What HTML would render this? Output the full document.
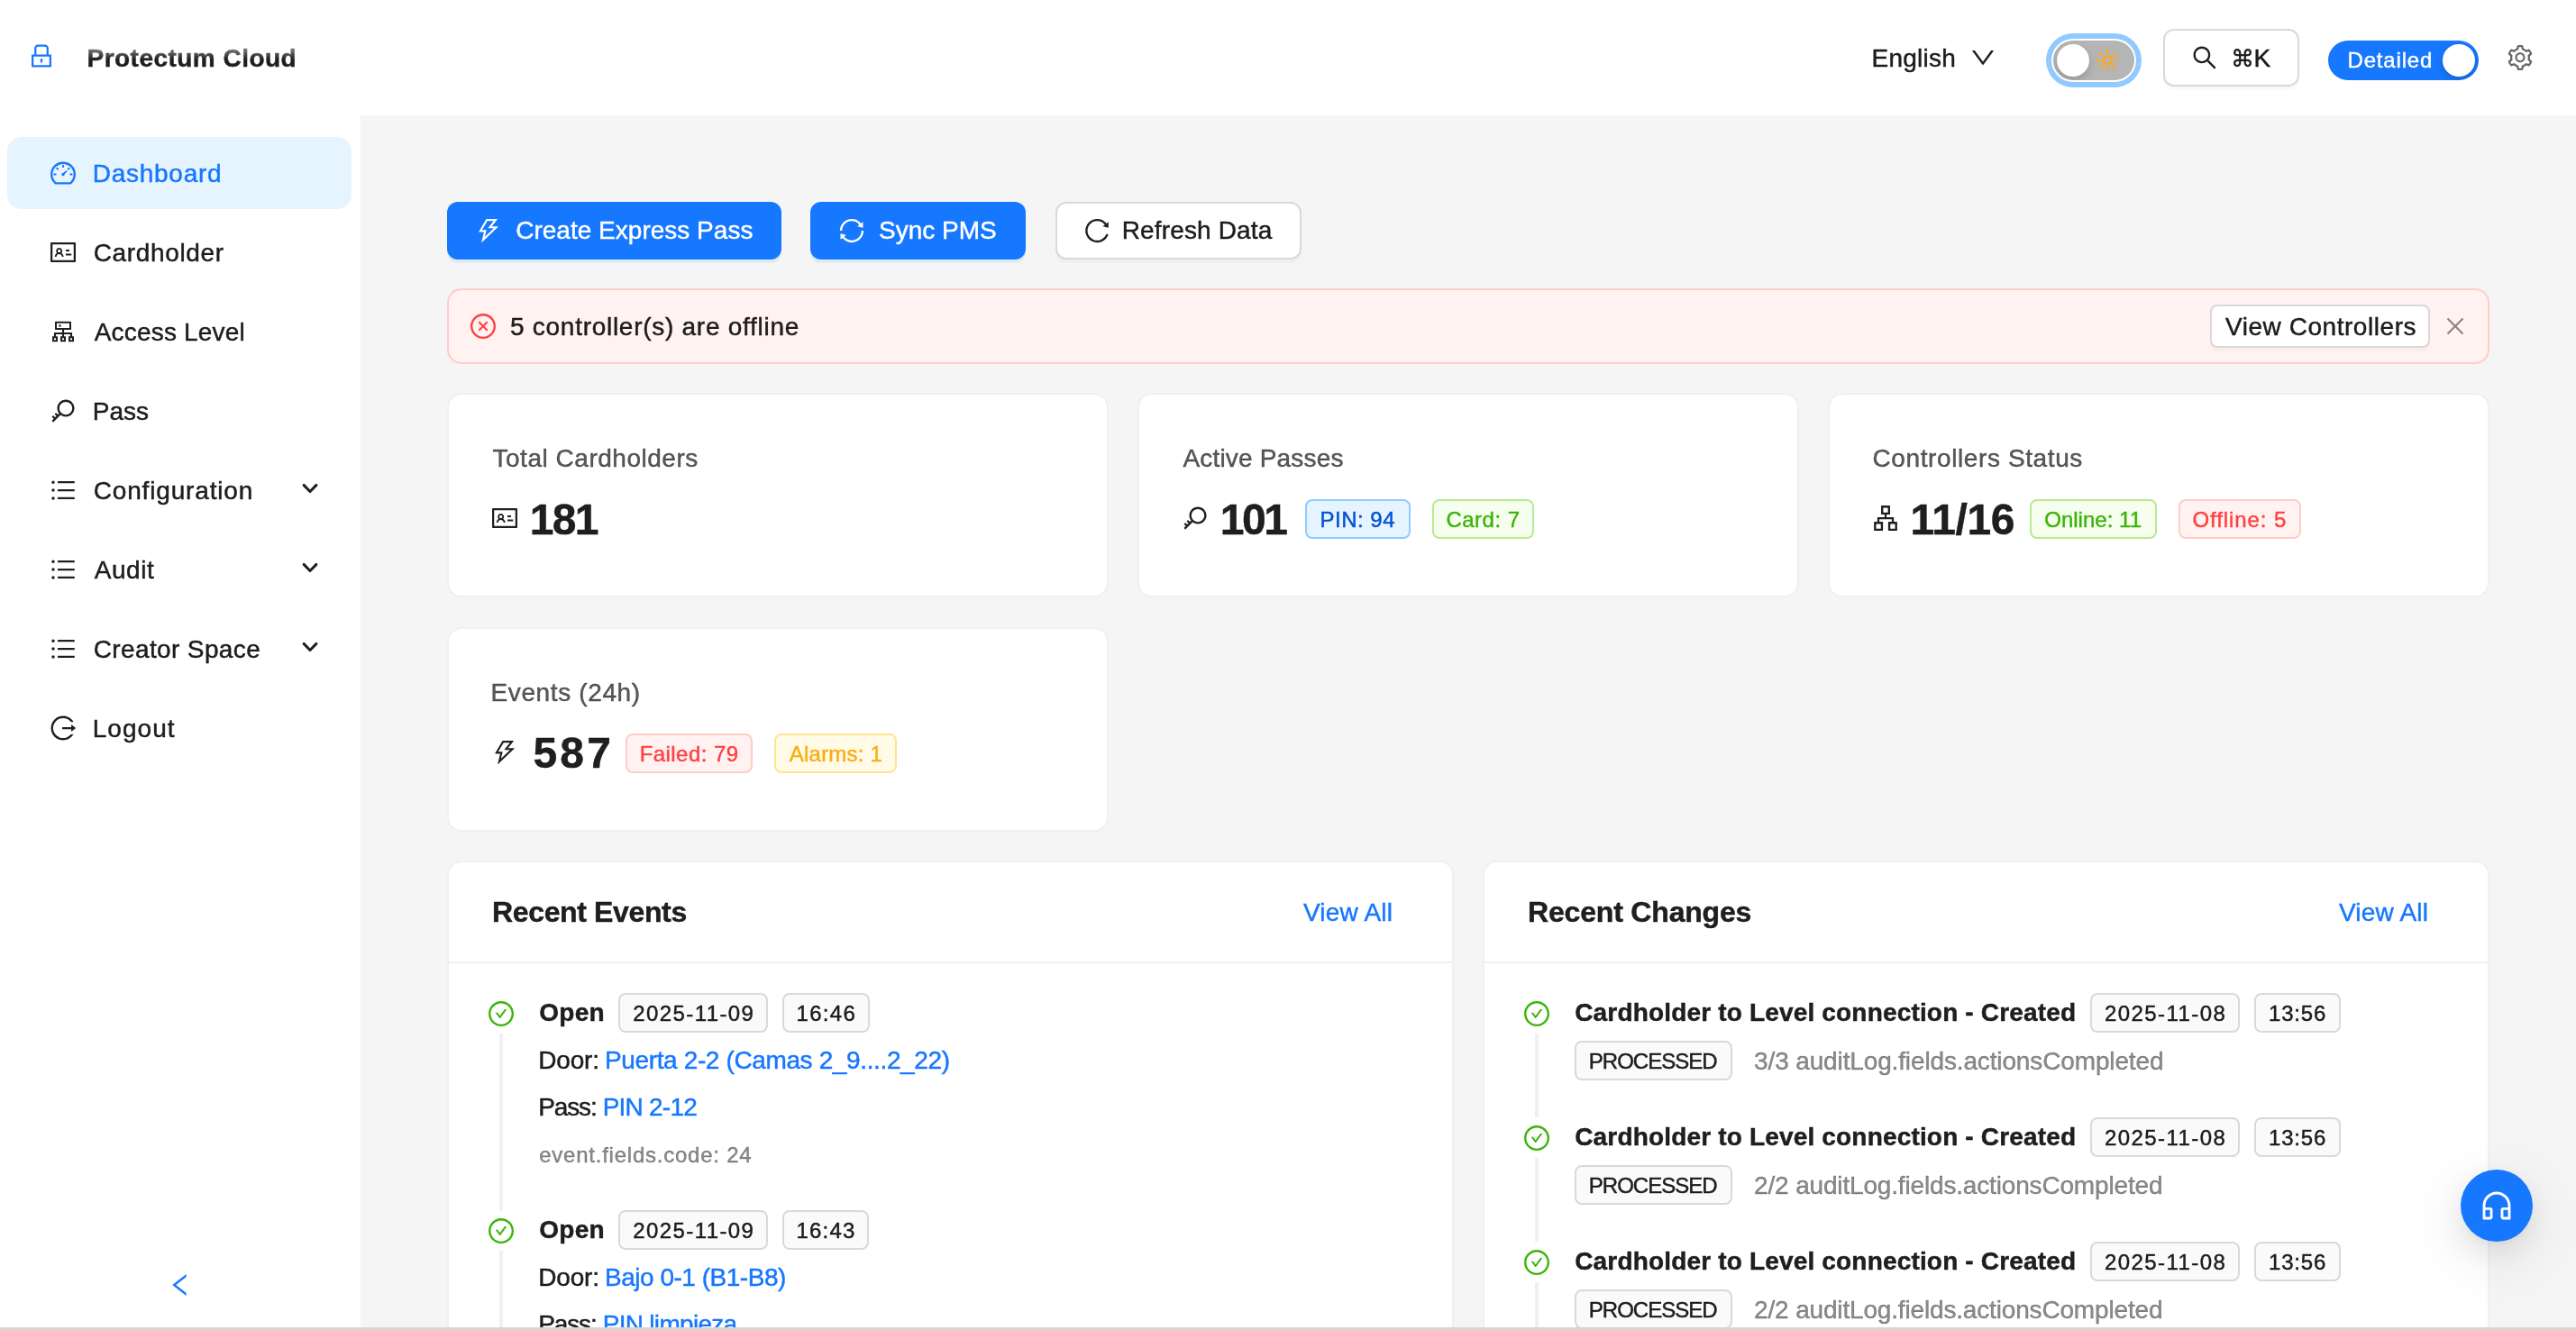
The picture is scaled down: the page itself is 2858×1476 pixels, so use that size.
<!DOCTYPE html>
<html lang="en">
<head>
<meta charset="utf-8">
<title>Protectum Cloud</title>
<style>
*{box-sizing:border-box;margin:0;padding:0}
html,body{width:2858px;height:1476px;overflow:hidden;background:#f5f5f5}
body{font-family:"Liberation Sans","DejaVu Sans",sans-serif;font-size:28px;line-height:44px;color:rgba(0,0,0,.88);position:relative}
svg{display:block;fill:currentColor}
.a{position:absolute;white-space:nowrap}
.t{position:absolute;white-space:nowrap;height:44px;line-height:44px;font-size:28px;-webkit-text-stroke:.45px}
.b{font-weight:700}
.s24{font-size:24px}
.lnk{color:#1677ff}
.mut{color:rgba(0,0,0,.45)}
#app{position:absolute;left:0;top:0;width:2858px;height:1476px;will-change:transform}
#hdr{position:absolute;left:0;top:0;width:2858px;height:128px;background:#fff}
#side{position:absolute;left:0;top:128px;width:400px;height:1348px;background:#fff}
#sel{position:absolute;left:8px;top:152px;width:382px;height:80px;border-radius:16px;background:#e6f4ff}
.brand{font-size:28px;font-weight:700;background:linear-gradient(180deg,#8a8a8a 0%,#8a8a8a 22%,#1f1f1f 52%,#1a1a1a 100%);-webkit-background-clip:text;background-clip:text;color:transparent;-webkit-text-fill-color:transparent}
.btn{position:absolute;height:64px;border-radius:12px;font-size:28px}
.btn.pri{background:#1677ff;color:#fff;box-shadow:0 4px 0 rgba(5,145,255,.1)}
.btn.def{background:#fff;border:2px solid #d9d9d9;box-shadow:0 4px 0 rgba(0,0,0,.02)}
.card{position:absolute;background:#fff;border:2px solid #f0f0f0;border-radius:16px}
.tag{position:absolute;height:44px;border:2px solid #d9d9d9;background:#fafafa;border-radius:8px}
.tag.blue{color:#0958d9;background:#e6f4ff;border-color:#91caff}
.tag.green{color:#389e0d;background:#f6ffed;border-color:#b7eb8f}
.tag.red{color:#ff4d4f;background:#fff2f0;border-color:#ffccc7}
.tag.gold{color:#faad14;background:#fffbe6;border-color:#ffe58f}
.num{position:absolute;white-space:nowrap;font-size:48px;font-weight:700;line-height:76px;height:76px;color:rgba(0,0,0,.88)}
.ttl{color:rgba(0,0,0,.65)}
.tail{position:absolute;width:4px;background:#f0f0f0}
@media (max-width:1600px){html,body{width:1429px;height:738px}#app{transform:scale(.5);transform-origin:0 0}}
.tt{color:rgba(0,0,0,.88)}
.tt.blue{color:#0452d8}.tt.green{color:#3cb40a}.tt.red{color:#ff4043}.tt.gold{color:#faad14}
</style>
</head>
<body>
<div id="app">
<div id="hdr">
<svg viewBox="64 64 896 896" width="28" height="28" style="position:absolute;left:32px;top:48px;color:#1677ff;"><path d="M832 464h-68V240c0-70.700-57.300-128-128-128H388c-70.700 0-128 57.300-128 128v224h-68c-17.700 0-32 14.300-32 32v384c0 17.700 14.300 32 32 32h640c17.700 0 32-14.300 32-32V496c0-17.700-14.300-32-32-32zM332 240c0-30.900 25.100-56 56-56h248c30.900 0 56 25.100 56 56v224H332V240zm460 600H232V536h560v304zM484 701v53c0 4.400 3.600 8 8 8h40c4.400 0 8-3.600 8-8v-53a48.010 48.010 0 10-56 0z"/></svg>
<div class="t brand" style="left:96.50px;top:43px;font-weight:700;letter-spacing:0.475px;">Protectum Cloud</div>
<div class="t" style="left:2076.50px;top:43px;letter-spacing:0.256px;">English</div>
<svg viewBox="64 64 896 896" width="28" height="28" style="position:absolute;left:2186px;top:50px;"><path d="M884 256h-75c-5.100 0-9.900 2.500-12.900 6.600L512 654.200 227.900 262.600c-3-4.100-7.800-6.600-12.900-6.600h-75c-6.500 0-10.300 7.400-6.500 12.700l352.600 486.100c12.800 17.600 39 17.600 51.700 0l352.600-486.100c3.900-5.300.1-12.700-6.400-12.700z"/></svg>
<div class="a" style="left:2270px;top:37px;width:106px;height:60px;border-radius:30px;background:#91caff"></div>
<div class="a" style="left:2276px;top:43px;width:94px;height:48px;border-radius:24px;background:#fff"></div>
<div class="a" style="left:2278px;top:45px;width:90px;height:44px;border-radius:22px;background:#b5b5b5;overflow:hidden"><div class="a" style="left:4px;top:4px;width:36px;height:36px;border-radius:18px;background:#fff;box-shadow:0 4px 8px rgba(0,35,11,.2)"></div></div>
<svg class="a" style="left:2324px;top:53px" width="28" height="28" viewBox="-14 -14 28 28"><g stroke="#f9a825" stroke-width="2.5"><line x1="7.40" y1="0.00" x2="12.10" y2="0.00"/><line x1="5.23" y1="5.23" x2="8.56" y2="8.56"/><line x1="0.00" y1="7.40" x2="0.00" y2="12.10"/><line x1="-5.23" y1="5.23" x2="-8.56" y2="8.56"/><line x1="-7.40" y1="0.00" x2="-12.10" y2="0.00"/><line x1="-5.23" y1="-5.23" x2="-8.56" y2="-8.56"/><line x1="-0.00" y1="-7.40" x2="-0.00" y2="-12.10"/><line x1="5.23" y1="-5.23" x2="8.56" y2="-8.56"/></g><circle r="4.6" fill="none" stroke="#f9a825" stroke-width="2.5"/></svg>
<div class="btn def" style="left:2400px;top:32px;width:151px"></div>
<svg viewBox="64 64 896 896" width="28" height="28" style="position:absolute;left:2432px;top:50px;"><path d="M909.6 854.5L649.9 594.8C690.2 542.7 712 479 712 412c0-80.2-31.3-155.4-87.9-212.1-56.6-56.7-132-87.9-212.1-87.9s-155.500 31.300-212.100 87.900C143.200 256.500 112 331.800 112 412c0 80.100 31.300 155.500 87.900 212.100C256.500 680.800 331.800 712 412 712c67 0 130.600-21.800 182.700-62l259.700 259.600a8.200 8.200 0 0011.600 0l43.600-43.500a8.200 8.200 0 000-11.600zM570.400 570.400C528 612.700 471.800 636 412 636s-116-23.300-158.400-65.600C211.300 528 188 471.800 188 412s23.300-116.100 65.600-158.400C296 211.300 352.200 188 412 188s116.100 23.200 158.400 65.600S636 352.200 636 412s-23.300 116.100-65.600 158.400z"/></svg>
<div class="t" style="left:2475px;top:43px"><span style="font-family:'DejaVu Sans',sans-serif;font-size:26px">⌘</span><span style="margin-left:-.5px">K</span></div>
<div class="a" style="left:2583px;top:45px;width:167px;height:44px;border-radius:22px;background:#1677ff;overflow:hidden"><div class="a" style="left:127px;top:4px;width:36px;height:36px;border-radius:18px;background:#fff;box-shadow:0 4px 8px rgba(0,35,11,.2)"></div></div>
<div class="t" style="left:2604.50px;top:45px;font-size:24px;letter-spacing:0.828px;color:#fff">Detailed</div>
<svg viewBox="64 64 896 896" width="28" height="28" style="position:absolute;left:2782px;top:50px;color:rgba(0,0,0,.6);"><path d="M924.8 625.700l-65.500-56c3.100-19 4.700-38.400 4.700-57.800s-1.600-38.800-4.700-57.800l65.500-56a32.030 32.030 0 009.300-35.200l-.9-2.600a442.350 442.350 0 00-79.700-137.900l-1.800-2.100a32.120 32.120 0 00-35.100-9.500l-81.300 28.900c-30-24.600-63.500-44-99.700-57.600l-15.700-85a32.050 32.050 0 00-25.800-25.700l-2.700-.5c-52.100-9.400-106.900-9.400-159 0l-2.700.5a32.050 32.050 0 00-25.800 25.700l-15.800 85.400a351.860 351.860 0 00-99 57.400l-81.900-29.100a32 32 0 00-35.100 9.500l-1.800 2.100a446.020 446.020 0 00-79.700 137.900l-.9 2.600c-4.500 12.500-.8 26.500 9.300 35.200l66.300 56.600c-3.100 18.800-4.600 38-4.600 57.100 0 19.200 1.500 38.400 4.600 57.100L99 625.500a32.030 32.030 0 00-9.300 35.200l.9 2.600c18.100 50.400 44.900 96.900 79.700 137.900l1.800 2.100a32.120 32.120 0 0035.100 9.500l81.900-29.100c29.800 24.500 63.100 43.900 99 57.400l15.800 85.400a32.050 32.050 0 0025.800 25.700l2.700.5a449.400 449.400 0 00159 0l2.700-.5a32.050 32.050 0 0025.800-25.700l15.700-85a350 350 0 0099.700-57.600l81.300 28.900a32 32 0 0035.100-9.500l1.800-2.100c34.800-41.100 61.600-87.500 79.700-137.900l.9-2.600c4.500-12.300.8-26.300-9.300-35zM788.300 465.900c2.500 15.100 3.800 30.600 3.800 46.100s-1.300 31-3.800 46.100l-6.600 40.100 74.700 63.900a370.030 370.030 0 01-42.600 73.600L721 702.800l-31.400 25.800c-23.900 19.600-50.500 35-79.300 45.800l-38.100 14.300-17.900 97a377.500 377.500 0 01-85 0l-17.900-97.200-37.800-14.500c-28.500-10.800-55-26.200-78.700-45.700l-31.400-25.900-93.400 33.200c-17-22.900-31.200-47.600-42.600-73.600l75.500-64.500-6.500-40c-2.400-14.900-3.700-30.300-3.700-45.500 0-15.300 1.200-30.600 3.700-45.500l6.500-40-75.500-64.500c11.300-26.100 25.600-50.700 42.600-73.600l93.400 33.200 31.400-25.900c23.700-19.500 50.200-34.900 78.700-45.700l37.900-14.300 17.900-97.200c28.100-3.200 56.800-3.200 85 0l17.900 97 38.100 14.300c28.700 10.800 55.400 26.200 79.300 45.800l31.400 25.800 92.800-32.900c17 22.900 31.200 47.600 42.600 73.600L781.800 426l6.500 39.900zM512 326c-97.200 0-176 78.800-176 176s78.800 176 176 176 176-78.800 176-176-78.800-176-176-176zm79.200 255.200A111.600 111.600 0 01512 614c-29.900 0-58-11.700-79.200-32.800A111.600 111.600 0 01400 502c0-29.900 11.700-58 32.800-79.200C454 401.600 482.100 390 512 390c29.900 0 58 11.600 79.200 32.800A111.600 111.600 0 01624 502c0 29.900-11.700 58-32.800 79.200z"/></svg>
</div>
<div id="side"></div><div id="sel"></div>
<svg viewBox="64 64 896 896" width="28" height="28" style="position:absolute;left:56px;top:178px;color:#1677ff;"><path d="M924.800 385.600a446.700 446.700 0 00-96-142.400 446.700 446.700 0 00-142.400-96C631.100 123.800 572.500 112 512 112s-119.100 11.800-174.400 35.200a446.700 446.700 0 00-142.400 96 446.700 446.700 0 00-96 142.400C75.800 440.900 64 499.500 64 560c0 132.700 58.300 257.700 159.900 343.100l1.700 1.400c5.800 4.800 13.100 7.500 20.600 7.500h531.700c7.500 0 14.800-2.700 20.600-7.500l1.700-1.400C901.700 817.700 960 692.700 960 560c0-60.500-11.900-119.100-35.200-174.400zM761.400 836H262.600A371.120 371.120 0 01140 560c0-99.400 38.700-192.800 109-263 70.300-70.300 163.700-109 263-109 99.400 0 192.800 38.700 263 109 70.300 70.300 109 163.700 109 263 0 105.600-44.500 205.500-122.600 276zM623.500 421.500a8.030 8.030 0 00-11.300 0L527.700 506c-18.700-5-39.400-.2-54.100 14.500a55.950 55.950 0 000 79.200 55.950 55.950 0 0079.200 0 55.870 55.870 0 0014.500-54.100l84.500-84.500c3.100-3.100 3.100-8.200 0-11.300l-28.300-28.300zM490 320h44c4.400 0 8-3.600 8-8v-80c0-4.400-3.600-8-8-8h-44c-4.400 0-8 3.600-8 8v80c0 4.400 3.600 8 8 8zm260 218v44c0 4.400 3.600 8 8 8h80c4.400 0 8-3.600 8-8v-44c0-4.400-3.600-8-8-8h-80c-4.400 0-8 3.600-8 8zm12.700-197.200l-31.100-31.100a8.030 8.030 0 00-11.300 0l-56.600 56.600a8.030 8.030 0 000 11.300l31.100 31.100c3.100 3.100 8.200 3.100 11.300 0l56.600-56.600c3.100-3.100 3.100-8.200 0-11.300zm-458.600-31.100a8.030 8.030 0 00-11.300 0l-31.100 31.100a8.030 8.030 0 000 11.300l56.600 56.600c3.100 3.100 8.200 3.100 11.300 0l31.100-31.100c3.100-3.100 3.100-8.200 0-11.300l-56.600-56.600zM262 530h-80c-4.400 0-8 3.600-8 8v44c0 4.400 3.600 8 8 8h80c4.400 0 8-3.600 8-8v-44c0-4.400-3.600-8-8-8z"/></svg>
<div class="t" style="left:102.70px;top:171px;letter-spacing:0.749px;color:#1677ff;">Dashboard</div>
<svg viewBox="64 64 896 896" width="28" height="28" style="position:absolute;left:56px;top:266px;"><path d="M928 160H96c-17.700 0-32 14.300-32 32v640c0 17.700 14.300 32 32 32h832c17.700 0 32-14.300 32-32V192c0-17.700-14.300-32-32-32zm-40 632H136V232h752v560zM610.300 476h123.400c1.300 0 2.300-3.600 2.300-8v-48c0-4.400-1-8-2.300-8H610.300c-1.300 0-2.300 3.600-2.300 8v48c0 4.400 1 8 2.300 8zm4.800 144h185.700c3.900 0 7.100-3.600 7.100-8v-48c0-4.400-3.200-8-7.100-8H615.100c-3.900 0-7.100 3.600-7.100 8v48c0 4.400 3.200 8 7.100 8zM224 673h43.900c4.200 0 7.600-3.300 7.900-7.500 3.800-50.500 46-90.500 97.200-90.500s93.400 40 97.200 90.500c.3 4.200 3.700 7.500 7.900 7.500H522a8 8 0 008-8.400c-2.800-53.300-32-99.700-74.600-126.100a111.800 111.800 0 0029.100-75.500c0-61.900-49.900-112-111.400-112s-111.400 50.100-111.400 112c0 29.100 11 55.500 29.100 75.500a158.090 158.090 0 00-74.600 126.100c-.4 4.600 3.200 8.400 7.800 8.400zm149-262c28.500 0 51.700 23.300 51.700 52s-23.200 52-51.700 52-51.700-23.300-51.700-52 23.200-52 51.700-52z"/></svg>
<div class="t" style="left:103.70px;top:259px;letter-spacing:0.645px;">Cardholder</div>
<svg viewBox="64 64 896 896" width="28" height="28" style="position:absolute;left:56px;top:354px;"><path d="M888 680h-54V540H546v-92h238c8.800 0 16-7.200 16-16V168c0-8.800-7.200-16-16-16H240c-8.800 0-16 7.200-16 16v264c0 8.800 7.200 16 16 16h238v92H190v140h-54c-4.400 0-8 3.600-8 8v176c0 4.400 3.600 8 8 8h176c4.400 0 8-3.600 8-8V688c0-4.400-3.600-8-8-8h-54v-72h220v72h-54c-4.400 0-8 3.600-8 8v176c0 4.400 3.600 8 8 8h176c4.400 0 8-3.600 8-8V688c0-4.400-3.600-8-8-8h-54v-72h220v72h-54c-4.400 0-8 3.600-8 8v176c0 4.400 3.600 8 8 8h176c4.400 0 8-3.600 8-8V688c0-4.400-3.600-8-8-8zM256 805.300c0 1.500-1.200 2.700-2.700 2.700h-58.700c-1.500 0-2.700-1.200-2.700-2.700v-58.700c0-1.500 1.200-2.700 2.700-2.700h58.700c1.500 0 2.700 1.200 2.700 2.700v58.700zm288 0c0 1.500-1.200 2.700-2.700 2.700h-58.700c-1.500 0-2.700-1.200-2.700-2.700v-58.700c0-1.500 1.200-2.700 2.700-2.700h58.700c1.500 0 2.700 1.200 2.700 2.700v58.700zM288 384V216h448v168H288zm544 421.300c0 1.500-1.200 2.700-2.700 2.700h-58.700c-1.500 0-2.700-1.200-2.700-2.700v-58.700c0-1.500 1.200-2.700 2.700-2.700h58.700c1.500 0 2.700 1.200 2.700 2.700v58.700zM360 300a40 40 0 1080 0 40 40 0 10-80 0z"/></svg>
<div class="t" style="left:104.70px;top:347px;letter-spacing:0.196px;">Access Level</div>
<svg viewBox="64 64 896 896" width="28" height="28" style="position:absolute;left:56px;top:442px;"><path d="M608 112c-167.900 0-304 136.100-304 304 0 70.300 23.900 135 63.900 186.500l-41.100 41.100-62.300-62.300a8.150 8.150 0 00-11.400 0l-39.800 39.800a8.150 8.150 0 000 11.400l62.300 62.300-44.900 44.900-62.300-62.300a8.150 8.150 0 00-11.400 0l-39.800 39.800a8.150 8.150 0 000 11.400l62.300 62.300-65.300 65.300a8.030 8.030 0 000 11.300l42.300 42.300c3.100 3.100 8.200 3.100 11.300 0l253.600-253.600A304.060 304.060 0 00608 720c167.900 0 304-136.100 304-304S775.900 112 608 112zm161.200 465.200C726.200 620.300 668.900 644 608 644c-60.900 0-118.200-23.700-161.200-66.800-43.100-43-66.800-100.300-66.800-161.200 0-60.900 23.700-118.200 66.800-161.200 43-43.100 100.300-66.800 161.200-66.800 60.900 0 118.200 23.700 161.200 66.800 43.100 43 66.800 100.300 66.800 161.200 0 60.900-23.700 118.200-66.800 161.200z"/></svg>
<div class="t" style="left:102.70px;top:435px;letter-spacing:0.017px;">Pass</div>
<svg viewBox="64 64 896 896" width="28" height="28" style="position:absolute;left:56px;top:530px;"><path d="M912 192H328c-4.400 0-8 3.600-8 8v56c0 4.400 3.600 8 8 8h584c4.400 0 8-3.600 8-8v-56c0-4.400-3.600-8-8-8zm0 284H328c-4.400 0-8 3.600-8 8v56c0 4.400 3.600 8 8 8h584c4.400 0 8-3.600 8-8v-56c0-4.400-3.600-8-8-8zm0 284H328c-4.400 0-8 3.600-8 8v56c0 4.400 3.600 8 8 8h584c4.400 0 8-3.600 8-8v-56c0-4.400-3.600-8-8-8zM104 228a56 56 0 10112 0 56 56 0 10-112 0zm0 284a56 56 0 10112 0 56 56 0 10-112 0zm0 284a56 56 0 10112 0 56 56 0 10-112 0z"/></svg>
<div class="t" style="left:103.70px;top:523px;letter-spacing:0.843px;">Configuration</div>
<svg class="a" style="left:332px;top:530px" width="24" height="24" viewBox="0 0 24 24"><path d="M5.1 8.4L12 15.5L18.9 8.4" fill="none" stroke="rgba(0,0,0,.88)" stroke-width="3" stroke-linecap="round" stroke-linejoin="round"/></svg>
<svg viewBox="64 64 896 896" width="28" height="28" style="position:absolute;left:56px;top:618px;"><path d="M912 192H328c-4.400 0-8 3.600-8 8v56c0 4.400 3.600 8 8 8h584c4.400 0 8-3.600 8-8v-56c0-4.400-3.600-8-8-8zm0 284H328c-4.400 0-8 3.600-8 8v56c0 4.400 3.600 8 8 8h584c4.400 0 8-3.600 8-8v-56c0-4.400-3.600-8-8-8zm0 284H328c-4.400 0-8 3.600-8 8v56c0 4.400 3.600 8 8 8h584c4.400 0 8-3.600 8-8v-56c0-4.400-3.600-8-8-8zM104 228a56 56 0 10112 0 56 56 0 10-112 0zm0 284a56 56 0 10112 0 56 56 0 10-112 0zm0 284a56 56 0 10112 0 56 56 0 10-112 0z"/></svg>
<div class="t" style="left:104.70px;top:611px;letter-spacing:0.565px;">Audit</div>
<svg class="a" style="left:332px;top:618px" width="24" height="24" viewBox="0 0 24 24"><path d="M5.1 8.4L12 15.5L18.9 8.4" fill="none" stroke="rgba(0,0,0,.88)" stroke-width="3" stroke-linecap="round" stroke-linejoin="round"/></svg>
<svg viewBox="64 64 896 896" width="28" height="28" style="position:absolute;left:56px;top:706px;"><path d="M912 192H328c-4.400 0-8 3.600-8 8v56c0 4.400 3.600 8 8 8h584c4.400 0 8-3.600 8-8v-56c0-4.400-3.600-8-8-8zm0 284H328c-4.400 0-8 3.600-8 8v56c0 4.400 3.600 8 8 8h584c4.400 0 8-3.600 8-8v-56c0-4.400-3.600-8-8-8zm0 284H328c-4.400 0-8 3.600-8 8v56c0 4.400 3.600 8 8 8h584c4.400 0 8-3.600 8-8v-56c0-4.400-3.600-8-8-8zM104 228a56 56 0 10112 0 56 56 0 10-112 0zm0 284a56 56 0 10112 0 56 56 0 10-112 0zm0 284a56 56 0 10112 0 56 56 0 10-112 0z"/></svg>
<div class="t" style="left:103.70px;top:699px;letter-spacing:0.378px;">Creator Space</div>
<svg class="a" style="left:332px;top:706px" width="24" height="24" viewBox="0 0 24 24"><path d="M5.1 8.4L12 15.5L18.9 8.4" fill="none" stroke="rgba(0,0,0,.88)" stroke-width="3" stroke-linecap="round" stroke-linejoin="round"/></svg>
<svg viewBox="64 64 896 896" width="28" height="28" style="position:absolute;left:56px;top:794px;"><path d="M868 732h-70.300c-4.800 0-9.300 2.100-12.300 5.800-7 8.500-14.500 16.700-22.400 24.500a353.840 353.840 0 01-112.700 75.900A352.800 352.800 0 01512.400 866c-47.900 0-94.300-9.400-137.900-27.800a353.840 353.840 0 01-112.700-75.900 353.280 353.280 0 01-76-112.500C167.300 606.200 158 559.900 158 512s9.400-94.200 27.800-137.800c17.800-42.100 43.400-80 76-112.500s70.500-58.100 112.700-75.900c43.600-18.400 90-27.800 137.900-27.800 47.900 0 94.300 9.300 137.900 27.800 42.200 17.800 80.100 43.400 112.700 75.900 7.900 7.900 15.300 16.100 22.400 24.500 3 3.700 7.600 5.800 12.300 5.800H868c6.300 0 10.200-7 6.700-12.300C798 160.500 663.800 81.600 511.300 82 271.700 82.600 79.600 277.100 82 516.400 84.400 751.900 276.200 942 512.400 942c152.100 0 285.700-78.800 362.300-197.700 3.400-5.300-.4-12.300-6.700-12.300zm88.900-226.300L815 393.700c-5.300-4.200-13-.4-13 6.300v76H488c-4.400 0-8 3.600-8 8v56c0 4.400 3.600 8 8 8h314v76c0 6.700 7.800 10.500 13 6.300l141.900-112a8 8 0 000-12.600z"/></svg>
<div class="t" style="left:102.70px;top:787px;letter-spacing:1.048px;">Logout</div>
<svg viewBox="64 64 896 896" width="28" height="28" style="position:absolute;left:186px;top:1412px;color:#1677ff;"><path d="M724 218.300V141c0-6.700-7.700-10.400-12.900-6.300L260.300 486.800a31.860 31.860 0 000 50.300l450.800 352.100c5.300 4.100 12.900.4 12.900-6.300v-77.300c0-4.900-2.300-9.600-6.100-12.600l-360-281 360-281.100c3.800-3 6.100-7.700 6.100-12.600z"/></svg>
<div class="btn pri" style="left:496px;top:224px;width:371px"></div>
<svg viewBox="64 64 896 896" width="28" height="28" style="position:absolute;left:528px;top:242px;color:#fff;"><path d="M848 359.300H627.700L825.800 109c4.100-5.300.4-13-6.300-13H436c-2.800 0-5.500 1.500-6.900 4L170 547.500c-3.100 5.300.7 12 6.900 12h174.400l-89.400 357.600c-1.900 7.800 7.500 13.300 13.300 7.700L853.500 373c5.200-4.900 1.700-13.700-5.500-13.700zM378.200 732.500l60.300-241H281.100l189.600-327.400h224.600L487 427.400h211L378.200 732.500z"/></svg>
<div class="t" style="left:572.20px;top:234px;letter-spacing:0.012px;color:#fff">Create Express Pass</div>
<div class="btn pri" style="left:899px;top:224px;width:239px"></div>
<svg viewBox="64 64 896 896" width="28" height="28" style="position:absolute;left:931px;top:242px;color:#fff;"><path d="M168 504.200c1-43.700 10-86.100 26.900-126 17.300-41 42.100-77.700 73.700-109.400S337 212.300 378 195c42.400-17.900 87.400-27 133.900-27s91.500 9.100 133.800 27A341.500 341.500 0 01755 268.800c9.900 9.900 19.200 20.400 27.800 31.400l-60.200 47a8 8 0 003 14.100l175.700 43c5 1.200 9.900-2.600 9.900-7.700l.8-180.900c0-6.700-7.700-10.500-12.900-6.300l-56.400 44.100C765.800 155.100 646.200 92 511.800 92 282.700 92 96.300 275.600 92 503.800a8 8 0 008 8.200h60c4.400 0 7.900-3.500 8-7.800zm756 7.800h-60c-4.400 0-7.900 3.500-8 7.800-1 43.700-10 86.100-26.900 126-17.300 41-42.100 77.800-73.700 109.400A342.450 342.450 0 01512.100 856a342.240 342.240 0 01-243.200-100.800c-9.900-9.900-19.200-20.400-27.800-31.400l60.200-47a8 8 0 00-3-14.100l-175.700-43c-5-1.200-9.900 2.600-9.900 7.700l-.7 181c0 6.700 7.700 10.500 12.900 6.300l56.400-44.100C258.200 868.900 377.800 932 512.200 932c229.200 0 415.500-183.700 419.800-411.800a8 8 0 00-8-8.200z"/></svg>
<div class="t" style="left:975.00px;top:234px;color:#fff">Sync PMS</div>
<div class="btn def" style="left:1171px;top:224px;width:273px"></div>
<svg viewBox="64 64 896 896" width="28" height="28" style="position:absolute;left:1203px;top:242px;"><path d="M909.100 209.300l-56.400 44.100C775.800 155.100 656.200 92 521.900 92 290 92 102.300 279.500 102 511.500 101.700 743.700 289.800 932 521.900 932c181.300 0 335.800-115 394.600-276.100 1.500-4.200-.7-8.900-4.900-10.300l-56.700-19.500a8 8 0 00-10.100 4.800c-1.800 5-3.800 10-5.900 14.900-17.300 41-42.100 77.800-73.700 109.400A344.770 344.770 0 01655.900 829c-42.300 17.900-87.400 27-133.800 27-46.500 0-91.500-9.100-133.800-27A341.500 341.500 0 01279 755.200a342.160 342.160 0 01-73.700-109.400c-17.900-42.400-27-87.400-27-133.900s9.100-91.500 27-133.900c17.300-41 42.100-77.800 73.700-109.400 31.600-31.600 68.400-56.400 109.300-73.800 42.300-17.900 87.400-27 133.800-27 46.500 0 91.500 9.100 133.800 27a341.500 341.500 0 01109.300 73.800c9.900 9.900 19.200 20.400 27.800 31.400l-60.200 47a8 8 0 003 14.100l175.600 43c5 1.200 9.900-2.600 9.900-7.700l.8-180.900c-.1-6.600-7.800-10.300-13-6.200z"/></svg>
<div class="t" style="left:1244.70px;top:234px;letter-spacing:0.146px;">Refresh Data</div>
<div class="a" style="left:496px;top:320px;width:2266px;height:84px;border:2px solid #ffccc7;background:#fff2f0;border-radius:16px"></div>
<svg viewBox="64 64 896 896" width="28" height="28" style="position:absolute;left:522px;top:348px;color:#ff4043;"><path d="M512 64c247.400 0 448 200.600 448 448S759.400 960 512 960 64 759.400 64 512 264.600 64 512 64zm0 76c-205.400 0-372 166.600-372 372s166.600 372 372 372 372-166.600 372-372-166.600-372-372-372zm128.010 198.830c.030 0 .050.010.090.060l45.020 45.010a.200.200 0 01.050.090.120.120 0 010 .070c0 .020-.010.040-.050.080L557.250 512l127.870 127.860a.270.270 0 01.050.060v.020a.120.120 0 010 .070c0 .030-.010.050-.050.090l-45.020 45.020a.200.200 0 01-.090.050.120.120 0 01-.070 0c-.020 0-.040-.010-.080-.050L512 557.250 384.140 685.120c-.040.040-.060.050-.080.050a.120.120 0 01-.070 0c-.030 0-.050-.010-.090-.050l-45.020-45.020a.200.200 0 01-.050-.090.120.120 0 010-.070c0-.020.010-.040.060-.080L466.750 512 338.880 384.140a.270.270 0 01-.050-.060l-.010-.020a.120.120 0 010-.070c0-.030.010-.050.050-.090l45.020-45.020a.200.200 0 01.090-.050.120.120 0 01.070 0c.020 0 .040.010.080.060L512 466.750l127.860-127.860c.040-.050.060-.060.080-.060a.120.120 0 01.070 0z"/></svg>
<div class="t" style="left:566.00px;top:341px;letter-spacing:0.726px;">5 controller(s) are offline</div>
<div class="btn def" style="left:2452px;top:338px;width:244px;height:48px;border-radius:8px"></div>
<div class="t" style="left:2469.00px;top:341px;letter-spacing:0.544px;">View Controllers</div>
<svg viewBox="64 64 896 896" width="24" height="24" style="position:absolute;left:2712px;top:350px;color:rgba(0,0,0,.45);"><path d="M799.86 166.31c.02 0 .04.02.08.06l57.69 57.7c.04.03.05.05.06.08a.12.12 0 010 .06c0 .03-.02.05-.06.09L569.93 512l287.7 287.7c.04.04.05.06.06.09a.12.12 0 010 .07c0 .02-.02.04-.06.08l-57.7 57.69c-.03.04-.05.05-.07.06a.12.12 0 01-.07 0c-.03 0-.05-.02-.09-.06L512 569.93l-287.7 287.7c-.04.04-.06.05-.09.06a.12.12 0 01-.07 0c-.02 0-.04-.02-.08-.06l-57.69-57.7c-.04-.03-.05-.05-.06-.07a.12.12 0 010-.07c0-.03.02-.05.06-.09L454.07 512l-287.7-287.7c-.04-.04-.05-.06-.06-.09a.12.12 0 010-.07c0-.02.02-.04.06-.08l57.7-57.69c.03-.04.05-.05.07-.06a.12.12 0 01.07 0c.03 0 .05.02.09.06L512 454.07l287.7-287.7c.04-.04.06-.05.09-.06a.12.12 0 01.07 0z"/></svg>
<div class="card" style="left:496px;top:436px;width:734px;height:227px"></div>
<div class="t ttl" style="left:546.50px;top:487px;letter-spacing:0.522px;">Total Cardholders</div>
<svg viewBox="64 64 896 896" width="28" height="28" style="position:absolute;left:546px;top:561px;"><path d="M928 160H96c-17.700 0-32 14.300-32 32v640c0 17.700 14.300 32 32 32h832c17.700 0 32-14.300 32-32V192c0-17.700-14.300-32-32-32zm-40 632H136V232h752v560zM610.300 476h123.400c1.300 0 2.300-3.600 2.300-8v-48c0-4.400-1-8-2.300-8H610.300c-1.300 0-2.300 3.600-2.300 8v48c0 4.400 1 8 2.300 8zm4.800 144h185.700c3.900 0 7.100-3.600 7.100-8v-48c0-4.400-3.200-8-7.100-8H615.100c-3.900 0-7.100 3.600-7.100 8v48c0 4.400 3.200 8 7.100 8zM224 673h43.900c4.200 0 7.600-3.300 7.900-7.500 3.800-50.500 46-90.500 97.200-90.500s93.400 40 97.200 90.500c.3 4.200 3.700 7.500 7.900 7.500H522a8 8 0 008-8.400c-2.800-53.300-32-99.700-74.600-126.100a111.800 111.800 0 0029.100-75.500c0-61.900-49.900-112-111.400-112s-111.400 50.100-111.400 112c0 29.100 11 55.500 29.100 75.500a158.090 158.090 0 00-74.600 126.100c-.4 4.600 3.200 8.400 7.800 8.400zm149-262c28.500 0 51.700 23.300 51.700 52s-23.200 52-51.700 52-51.700-23.300-51.700-52 23.200-52 51.700-52z"/></svg>
<div class="t" style="left:587.70px;top:539px;height:76px;line-height:76px;font-size:48px;font-weight:700;letter-spacing:-1.645px;color:rgba(0,0,0,.88)">181</div>
<div class="card" style="left:1262px;top:436px;width:734px;height:227px"></div>
<div class="t ttl" style="left:1312.50px;top:487px;letter-spacing:0.171px;">Active Passes</div>
<svg viewBox="64 64 896 896" width="28" height="28" style="position:absolute;left:1312px;top:561px;"><path d="M608 112c-167.900 0-304 136.100-304 304 0 70.300 23.900 135 63.900 186.500l-41.100 41.100-62.300-62.300a8.150 8.150 0 00-11.400 0l-39.800 39.800a8.150 8.150 0 000 11.400l62.300 62.300-44.900 44.900-62.300-62.300a8.150 8.150 0 00-11.400 0l-39.800 39.800a8.150 8.150 0 000 11.400l62.300 62.300-65.300 65.300a8.030 8.030 0 000 11.300l42.300 42.300c3.100 3.100 8.200 3.100 11.300 0l253.600-253.600A304.060 304.060 0 00608 720c167.900 0 304-136.100 304-304S775.900 112 608 112zm161.200 465.200C726.200 620.300 668.900 644 608 644c-60.900 0-118.200-23.700-161.200-66.800-43.100-43-66.800-100.300-66.800-161.200 0-60.900 23.700-118.200 66.800-161.200 43-43.100 100.300-66.800 161.200-66.800 60.900 0 118.200 23.700 161.200 66.800 43.100 43 66.800 100.300 66.800 161.200 0 60.900-23.700 118.200-66.800 161.200z"/></svg>
<div class="t" style="left:1353.70px;top:539px;height:76px;line-height:76px;font-size:48px;font-weight:700;letter-spacing:-2.445px;color:rgba(0,0,0,.88)">101</div>
<div class="tag blue" style="left:1448px;top:554px;width:117px"></div>
<div class="t tt blue" style="left:1464.50px;top:555px;font-size:24px;letter-spacing:0.501px;">PIN: 94</div>
<div class="tag green" style="left:1589px;top:554px;width:113px"></div>
<div class="t tt green" style="left:1604.40px;top:555px;font-size:24px;letter-spacing:0.507px;">Card: 7</div>
<div class="card" style="left:2028px;top:436px;width:734px;height:227px"></div>
<div class="t ttl" style="left:2077.50px;top:487px;letter-spacing:0.604px;">Controllers Status</div>
<svg viewBox="64 64 896 896" width="28" height="28" style="position:absolute;left:2078px;top:561px;"><path d="M908 640H804V488c0-4.400-3.600-8-8-8H548v-96h108c8.800 0 16-7.200 16-16V80c0-8.800-7.200-16-16-16H368c-8.800 0-16 7.200-16 16v288c0 8.800 7.200 16 16 16h108v96H228c-4.400 0-8 3.600-8 8v152H116c-8.800 0-16 7.200-16 16v288c0 8.800 7.200 16 16 16h288c8.800 0 16-7.200 16-16V656c0-8.800-7.200-16-16-16H292v-88h440v88H620c-8.800 0-16 7.200-16 16v288c0 8.800 7.200 16 16 16h288c8.800 0 16-7.200 16-16V656c0-8.800-7.200-16-16-16zm-564 76v168H176V716h168zm84-408V140h168v168H428zm420 576H680V716h168v168z"/></svg>
<div class="t" style="left:2119.50px;top:539px;height:76px;line-height:76px;font-size:48px;font-weight:700;letter-spacing:-0.368px;color:rgba(0,0,0,.88)">11/16</div>
<div class="tag green" style="left:2252px;top:554px;width:141px"></div>
<div class="t tt green" style="left:2268.20px;top:555px;font-size:24px;letter-spacing:0.025px;">Online: 11</div>
<div class="tag red" style="left:2417px;top:554px;width:136px"></div>
<div class="t tt red" style="left:2432.50px;top:555px;font-size:24px;letter-spacing:0.915px;">Offline: 5</div>
<div class="card" style="left:496px;top:696px;width:734px;height:227px"></div>
<div class="t ttl" style="left:544.50px;top:747px;letter-spacing:0.625px;">Events (24h)</div>
<svg viewBox="64 64 896 896" width="28" height="28" style="position:absolute;left:546px;top:821px;"><path d="M848 359.300H627.700L825.800 109c4.100-5.300.4-13-6.300-13H436c-2.800 0-5.500 1.500-6.900 4L170 547.500c-3.100 5.300.7 12 6.900 12h174.400l-89.400 357.600c-1.900 7.800 7.500 13.300 13.300 7.700L853.500 373c5.200-4.900 1.700-13.700-5.500-13.700zM378.200 732.500l60.300-241H281.100l189.600-327.400h224.600L487 427.400h211L378.200 732.500z"/></svg>
<div class="t" style="left:591.40px;top:798px;height:76px;line-height:76px;font-size:48px;font-weight:700;letter-spacing:3.255px;color:rgba(0,0,0,.88)">587</div>
<div class="tag red" style="left:694px;top:814px;width:141px"></div>
<div class="t tt red" style="left:709.70px;top:815px;font-size:24px;letter-spacing:0.439px;">Failed: 79</div>
<div class="tag gold" style="left:859px;top:814px;width:136px"></div>
<div class="t tt gold" style="left:875.80px;top:815px;font-size:24px;letter-spacing:0.224px;">Alarms: 1</div>
<div class="card" style="left:496px;top:955px;width:1117px;height:600px;border-bottom-left-radius:0;border-bottom-right-radius:0"></div>
<div class="a" style="left:498px;top:1067px;width:1113px;height:2px;background:#f0f0f0"></div>
<div class="t" style="left:546.10px;top:988px;height:48px;line-height:48px;font-size:32px;font-weight:700;letter-spacing:-0.370px;">Recent Events</div>
<div class="t lnk" style="left:1446.00px;top:991px;letter-spacing:0.192px;">View All</div>
<div class="card" style="left:1645px;top:955px;width:1117px;height:600px;border-bottom-left-radius:0;border-bottom-right-radius:0"></div>
<div class="a" style="left:1647px;top:1067px;width:1113px;height:2px;background:#f0f0f0"></div>
<div class="t" style="left:1695.10px;top:988px;height:48px;line-height:48px;font-size:32px;font-weight:700;letter-spacing:-0.188px;">Recent Changes</div>
<div class="t lnk" style="left:2595.00px;top:991px;letter-spacing:0.192px;">View All</div>
<div class="tail" style="left:554px;top:1147px;height:197px"></div>
<div class="tail" style="left:554px;top:1388px;height:100px"></div>
<svg viewBox="64 64 896 896" width="28" height="28" style="position:absolute;left:542px;top:1111px;color:#3cb40a;"><path d="M699 353h-46.9c-10.2 0-19.9 4.9-25.9 13.3L469 584.3l-71.2-98.8c-6-8.3-15.6-13.3-25.9-13.3H325c-6.5 0-10.3 7.4-6.5 12.7l124.6 172.8a31.8 31.8 0 0051.7 0l210.6-292c3.900-5.300.1-12.700-6.400-12.700zM512 64C264.600 64 64 264.600 64 512s200.600 448 448 448 448-200.600 448-448S759.400 64 512 64zm0 820c-205.400 0-372-166.600-372-372s166.600-372 372-372 372 166.600 372 372-166.600 372-372 372z"/></svg>
<div class="t" style="left:598.20px;top:1102px;font-weight:700;letter-spacing:0.282px;">Open</div>
<div class="tag" style="left:686px;top:1102px;width:166px"></div>
<div class="t tt" style="left:702.30px;top:1103px;font-size:24px;letter-spacing:1.407px;">2025-11-09</div>
<div class="tag" style="left:868px;top:1102px;width:97px"></div>
<div class="t tt" style="left:883.50px;top:1103px;font-size:24px;letter-spacing:1.297px;">16:46</div>
<div class="t" style="left:597.20px;top:1155px;letter-spacing:-0.172px;">Door:</div>
<div class="t lnk" style="left:671.00px;top:1155px;letter-spacing:-0.370px;">Puerta 2-2 (Camas 2_9....2_22)</div>
<div class="t" style="left:597.20px;top:1207px;letter-spacing:-1.137px;">Pass:</div>
<div class="t lnk" style="left:668.70px;top:1207px;letter-spacing:-0.775px;">PIN 2-12</div>
<div class="t mut" style="left:598.20px;top:1260px;font-size:24px;letter-spacing:0.765px;">event.fields.code: 24</div>
<svg viewBox="64 64 896 896" width="28" height="28" style="position:absolute;left:542px;top:1352px;color:#3cb40a;"><path d="M699 353h-46.9c-10.2 0-19.9 4.9-25.9 13.3L469 584.3l-71.2-98.8c-6-8.3-15.6-13.3-25.9-13.3H325c-6.5 0-10.3 7.4-6.5 12.7l124.6 172.8a31.8 31.8 0 0051.7 0l210.6-292c3.900-5.300.1-12.700-6.400-12.700zM512 64C264.600 64 64 264.600 64 512s200.600 448 448 448 448-200.600 448-448S759.400 64 512 64zm0 820c-205.400 0-372-166.600-372-372s166.600-372 372-372 372 166.600 372 372-166.600 372-372 372z"/></svg>
<div class="t" style="left:598.20px;top:1343px;font-weight:700;letter-spacing:0.282px;">Open</div>
<div class="tag" style="left:686px;top:1343px;width:166px"></div>
<div class="t tt" style="left:702.30px;top:1344px;font-size:24px;letter-spacing:1.407px;">2025-11-09</div>
<div class="tag" style="left:868px;top:1343px;width:96px"></div>
<div class="t tt" style="left:883.50px;top:1344px;font-size:24px;letter-spacing:1.172px;">16:43</div>
<div class="t" style="left:597.20px;top:1396px;letter-spacing:-0.172px;">Door:</div>
<div class="t lnk" style="left:671.00px;top:1396px;letter-spacing:-0.481px;">Bajo 0-1 (B1-B8)</div>
<div class="t" style="left:597.20px;top:1448px;letter-spacing:-1.137px;">Pass:</div>
<div class="t lnk" style="left:668.70px;top:1448px;letter-spacing:-0.699px;">PIN limpieza</div>
<div class="t mut" style="left:598.20px;top:1501px;font-size:24px;letter-spacing:0.765px;">event.fields.code: 24</div>
<div class="tail" style="left:1703px;top:1147px;height:93px"></div>
<svg viewBox="64 64 896 896" width="28" height="28" style="position:absolute;left:1691px;top:1111px;color:#3cb40a;"><path d="M699 353h-46.9c-10.2 0-19.9 4.9-25.9 13.3L469 584.3l-71.2-98.8c-6-8.3-15.6-13.3-25.9-13.3H325c-6.5 0-10.3 7.4-6.5 12.7l124.6 172.8a31.8 31.8 0 0051.7 0l210.6-292c3.900-5.300.1-12.700-6.400-12.700zM512 64C264.600 64 64 264.600 64 512s200.600 448 448 448 448-200.600 448-448S759.400 64 512 64zm0 820c-205.400 0-372-166.600-372-372s166.600-372 372-372 372 166.600 372 372-166.600 372-372 372z"/></svg>
<div class="t" style="left:1747.20px;top:1102px;font-weight:700;letter-spacing:0.172px;">Cardholder to Level connection - Created</div>
<div class="tag" style="left:2319px;top:1102px;width:166px"></div>
<div class="t tt" style="left:2335.00px;top:1103px;font-size:24px;letter-spacing:1.418px;">2025-11-08</div>
<div class="tag" style="left:2501px;top:1102px;width:96px"></div>
<div class="t tt" style="left:2517.00px;top:1103px;font-size:24px;letter-spacing:0.822px;">13:56</div>
<div class="tag" style="left:1747px;top:1155px;width:175px"></div>
<div class="t tt" style="left:1762.80px;top:1156px;font-size:24px;letter-spacing:-0.996px;">PROCESSED</div>
<div class="t mut" style="left:1946.10px;top:1156px;letter-spacing:-0.137px;">3/3 auditLog.fields.actionsCompleted</div>
<div class="tail" style="left:1703px;top:1285px;height:93px"></div>
<svg viewBox="64 64 896 896" width="28" height="28" style="position:absolute;left:1691px;top:1249px;color:#3cb40a;"><path d="M699 353h-46.9c-10.2 0-19.9 4.9-25.9 13.3L469 584.3l-71.2-98.8c-6-8.3-15.6-13.3-25.9-13.3H325c-6.5 0-10.3 7.4-6.5 12.7l124.6 172.8a31.8 31.8 0 0051.7 0l210.6-292c3.900-5.300.1-12.700-6.400-12.700zM512 64C264.600 64 64 264.600 64 512s200.600 448 448 448 448-200.600 448-448S759.400 64 512 64zm0 820c-205.400 0-372-166.600-372-372s166.600-372 372-372 372 166.600 372 372-166.600 372-372 372z"/></svg>
<div class="t" style="left:1747.20px;top:1240px;font-weight:700;letter-spacing:0.172px;">Cardholder to Level connection - Created</div>
<div class="tag" style="left:2319px;top:1240px;width:166px"></div>
<div class="t tt" style="left:2335.00px;top:1241px;font-size:24px;letter-spacing:1.418px;">2025-11-08</div>
<div class="tag" style="left:2501px;top:1240px;width:96px"></div>
<div class="t tt" style="left:2517.00px;top:1241px;font-size:24px;letter-spacing:0.822px;">13:56</div>
<div class="tag" style="left:1747px;top:1293px;width:175px"></div>
<div class="t tt" style="left:1762.80px;top:1294px;font-size:24px;letter-spacing:-0.996px;">PROCESSED</div>
<div class="t mut" style="left:1946.10px;top:1294px;letter-spacing:-0.166px;">2/2 auditLog.fields.actionsCompleted</div>
<div class="tail" style="left:1703px;top:1423px;height:93px"></div>
<svg viewBox="64 64 896 896" width="28" height="28" style="position:absolute;left:1691px;top:1387px;color:#3cb40a;"><path d="M699 353h-46.9c-10.2 0-19.9 4.9-25.9 13.3L469 584.3l-71.2-98.8c-6-8.3-15.6-13.3-25.9-13.3H325c-6.5 0-10.3 7.4-6.5 12.7l124.6 172.8a31.8 31.8 0 0051.7 0l210.6-292c3.900-5.300.1-12.700-6.400-12.700zM512 64C264.600 64 64 264.600 64 512s200.600 448 448 448 448-200.600 448-448S759.400 64 512 64zm0 820c-205.400 0-372-166.600-372-372s166.600-372 372-372 372 166.600 372 372-166.600 372-372 372z"/></svg>
<div class="t" style="left:1747.20px;top:1378px;font-weight:700;letter-spacing:0.172px;">Cardholder to Level connection - Created</div>
<div class="tag" style="left:2319px;top:1378px;width:166px"></div>
<div class="t tt" style="left:2335.00px;top:1379px;font-size:24px;letter-spacing:1.418px;">2025-11-08</div>
<div class="tag" style="left:2501px;top:1378px;width:96px"></div>
<div class="t tt" style="left:2517.00px;top:1379px;font-size:24px;letter-spacing:0.822px;">13:56</div>
<div class="tag" style="left:1747px;top:1431px;width:175px"></div>
<div class="t tt" style="left:1762.80px;top:1432px;font-size:24px;letter-spacing:-0.996px;">PROCESSED</div>
<div class="t mut" style="left:1946.10px;top:1432px;letter-spacing:-0.166px;">2/2 auditLog.fields.actionsCompleted</div>
<div class="a" style="left:2730px;top:1298px;width:80px;height:80px;border-radius:40px;background:#1677ff;box-shadow:0 12px 32px 0 rgba(0,0,0,.08),0 6px 12px -8px rgba(0,0,0,.12),0 18px 56px 16px rgba(0,0,0,.05)"></div>
<svg viewBox="64 64 896 896" width="36" height="36" style="position:absolute;left:2752px;top:1320px;color:#fff;"><path d="M512 128c-212.100 0-384 171.900-384 384v360c0 13.300 10.700 24 24 24h184c35.300 0 64-28.700 64-64V624c0-35.300-28.700-64-64-64H200v-48c0-172.300 139.700-312 312-312s312 139.700 312 312v48H688c-35.300 0-64 28.700-64 64v208c0 35.300 28.700 64 64 64h184c13.300 0 24-10.700 24-24V512c0-212.100-171.900-384-384-384zM328 632v192H200V632h128zm496 192H696V632h128v192z"/></svg>
<div class="a" style="left:0;top:1473px;width:2858px;height:3px;background:#d6d6d6"></div>
</div>
</body>
</html>
